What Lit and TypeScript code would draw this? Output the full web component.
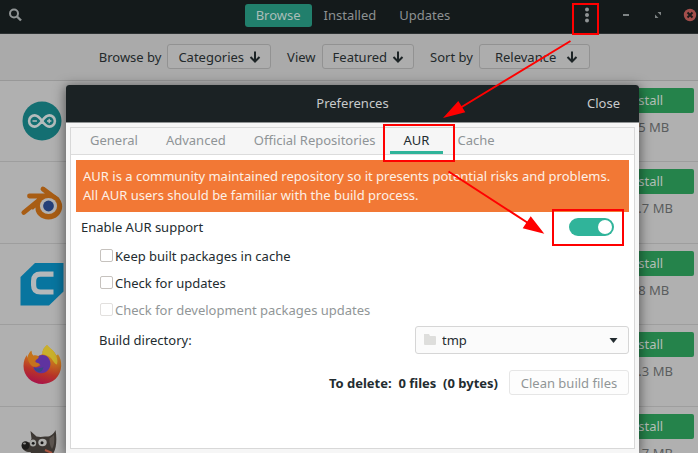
import { LitElement, html, css, svg } from "lit";
import { customElement, property, state } from "lit/decorators.js";
import { classMap } from "lit/directives/class-map.js";

const logos: Record<string, unknown> = {
  arduino: svg`
    <circle cx="22" cy="22" r="19.5" fill="#146f72"></circle>
    <g fill="none" stroke="#b4bcbc" stroke-width="2.6">
      <path d="M22 22c-2.500-3.600-4.600-5.600-7.300-5.600a5.600 5.600 0 0 0 0 11.200c2.700 0 4.800-2 7.300-5.600s4.600-5.600 7.300-5.600a5.600 5.600 0 0 1 0 11.200c-2.700 0-4.800-2-7.300-5.600z"></path>
      <path stroke-width="1.400" d="M12.500 22h4.400M27 22h4.400M29.200 19.800v4.400"></path>
    </g>`,
  blender: svg`
    <ellipse cx="28.500" cy="26.500" rx="13.700" ry="13" fill="#a85d14"></ellipse>
    <path fill="#a85d14" d="M11 29L27 13.500 36 16 20 32z"></path>
    <path fill="none" stroke="#a85d14" stroke-width="4.800" stroke-linecap="round" d="M23 9L37 19.500M9.500 16H30M3.800 32.500L24 16"></path>
    <path fill="#b0b0b0" d="M3 39L15.500 27.500 16 39z"></path>
    <ellipse cx="28.500" cy="26" rx="8.600" ry="8" fill="#b2b2b2"></ellipse>
    <circle cx="28.500" cy="26" r="5.400" fill="#243f78"></circle>`,
  cura: svg`
    <path fill="#08759f" d="M15 1h28.500v28.500L29 43.500H0.500V15z"></path>
    <path fill="#b4b8ba" d="M33.500 9.500v5.200H20.500q-4.300 0-4.300 4.300v4.200q0 4.300 4.300 4.300h13v5H20.500q-9.500 0-9.500-9.300v-4.200q0-9.500 9.500-9.500z"></path>`,
  firefox: svg`
    <defs>
      <linearGradient id="fx-body" x1="0.7" y1="0" x2="0.4" y2="1">
        <stop offset="0" stop-color="#c9a22a"></stop>
        <stop offset="0.4" stop-color="#c8701f"></stop>
        <stop offset="0.7" stop-color="#b93527"></stop>
        <stop offset="1" stop-color="#a8124a"></stop>
      </linearGradient>
    </defs>
    <path fill="url(#fx-body)" d="M27 2c2.500 3 5 4.200 7.500 7.500l2 3 1.500-1.200c2.500 3.700 3.500 7.700 3.200 12C40.500 33.500 33 41 22.500 41 11.500 41 3.500 33 3.500 23c0-5 1.500-8.500 3.500-11l.6 3c.4-2.700 1.800-5.500 3.700-7.300.2 2.300.8 3.800 2 5 1.700-.5 3.300-.4 5 .2L22.500 11c-.5-3.500 1.500-6.700 4.500-9z"></path>
    <path fill="#c9b02c" d="M27 2c2.500 3 5 4.200 7.500 7.500 2.500 4 3.700 8 2.500 12-3.500-1-5-7-9-8.500-1.500-.8-3.500-1.200-5.500-2-.5-3.500 1.500-6.700 4.500-9z"></path>
    <path fill="#5f33a0" d="M18.500 13c3.500-1.900 9-1 11 3.500 2.800 6.300-1 13.300-7.500 13.800-4.500.3-8.500-2.300-8.500-6.500 2 1.200 5 .5 7-1.500-2-.2-5-1.200-5-4.200 0-2.500 1.500-4.400 3-5.100z"></path>
    <path fill="#364a86" d="M14 24.500c2.500 1.500 6 1.200 9.500-.5-.8 3.500-2.500 5.300-4.500 5.200-2.200-.5-4.600-2.200-5-4.700z"></path>
    <path fill="#c5731c" d="M7.600 15c.4-2.700 1.800-5.500 3.700-7.300.2 2.300.8 3.800 2 5 2.500-.6 4.200-.2 5.700.8-.4 2.500-3.500 3-4.500 5.200 1.500.8 3.500 1 5.500 2.500-1.500 2-4 3-6.500 2.500-3-1-5-4.500-5.900-8.700z"></path>`,
  gimp: svg`
    <path fill="#3c3733" d="M35.500 5c1.500 8 1 17-1.500 22-2 4-7 6-13 6-5 0-8.500-2-10.500-6-4 .5-8-2-8.500-5.500l2-4.500 6 .5 1.500-4L10.500 6l6 5.500 4 .5 4.500-.5c5 .7 8.500-2 10.500-6.500z"></path>
    <path fill="#5c5550" d="M34 10c.8 6 0 11-2 14-2-3.500-3-7-2.500-10.500z"></path>
    <ellipse cx="5.500" cy="20.500" rx="4" ry="4.300" fill="#1c1b1a"></ellipse>
    <ellipse cx="4.500" cy="18.500" rx="1.500" ry="1" fill="#8d8d8b"></ellipse>
    <ellipse cx="13" cy="18" rx="3.200" ry="3.500" fill="#a9a9a6"></ellipse>
    <ellipse cx="22.500" cy="17.500" rx="4.200" ry="3.700" fill="#b0b0ae"></ellipse>
    <circle cx="13.200" cy="18.300" r="1.400" fill="#171717"></circle>
    <circle cx="22" cy="17.800" r="1.500" fill="#171717"></circle>
    <path stroke="#a85642" stroke-width="2" fill="none" d="M25 25l7 3"></path>`,
};

const packages = [
  { logo: "arduino", size: "38.5 MB" },
  { logo: "blender", size: "153.7 MB" },
  { logo: "cura", size: "30.8 MB" },
  { logo: "firefox", size: "216.3 MB" },
  { logo: "gimp", size: "109.7 MB" },
];

@customElement("package-row")
class PackageRow extends LitElement {
  @property() logo = "";
  @property() size = "";

  static styles = css`
    :host {
      display: flex;
      justify-content: space-between;
      align-items: flex-start;
      box-sizing: border-box;
      padding: 7px 4px 0 20px;
      border-bottom: 1px solid #9e9e9e;
      color: #5a5d5e;
    }
    .logo {
      width: 44px;
      height: 44px;
      margin-top: 11px;
    }
    .side {
      width: 99px;
      text-align: center;
      line-height: 18px;
    }
    .install {
      display: block;
      width: 100%;
      height: 25px;
      margin: 0 0 5px;
      padding: 0 0 2px;
      border: 0;
      border-radius: 2px;
      background: #25834b;
      color: #b4bfb8;
      font: inherit;
    }
  `;

  render() {
    return html`
      <svg class="logo" viewBox="0 0 44 44" aria-hidden="true">${logos[this.logo]}</svg>
      <div class="side">
        <button class="install">Install</button>
        <span>${this.size}</span>
      </div>
    `;
  }
}

@customElement("preferences-dialog")
class PreferencesDialog extends LitElement {
  @state() private tab = "AUR";

  static styles = css`
    :host {
      display: flex;
      flex-direction: column;
      box-sizing: border-box;
      background: #f6f6f6;
      color: #232c30;
      border-radius: 3px 3px 0 0;
      box-shadow: 0 2px 12px 1px rgba(0, 0, 0, 0.5);
    }
    button,
    select {
      font: inherit;
      color: inherit;
      margin: 0;
    }
    .title {
      display: grid;
      grid-template-columns: 1fr auto 1fr;
      align-items: center;
      box-sizing: border-box;
      height: 38px;
      padding: 0 19px 2px;
      background: #1b2224;
      color: #c8cacb;
      border-bottom: 1px solid #909394;
      border-radius: 3px 3px 0 0;
    }
    .heading {
      grid-column: 2;
      margin: 0;
      font: inherit;
    }
    .close {
      justify-self: end;
      padding: 0;
      border: 0;
      background: none;
    }
    .frame {
      flex: 1;
      margin: 4px;
      border: 1px solid #d8d8d8;
      background: #fff;
    }
    .tabs {
      display: flex;
      height: 26px;
      padding: 0 5px;
      background: #f6f6f6;
      border-bottom: 1px solid #dcdcdc;
    }
    .tab {
      padding: 0 14px;
      border: 0;
      border-bottom: 3px solid transparent;
      background: none;
      color: #8f9496;
    }
    .tab.on {
      color: #232c30;
      border-color: #30b49a;
    }
    .page {
      padding: 5px;
    }
    .warning {
      margin: 0;
      padding: 7px;
      background: #f27835;
      color: #fdf0e6;
      line-height: 19px;
    }
    .line {
      display: flex;
      align-items: center;
      justify-content: space-between;
      padding: 0 15px 0 5px;
      height: 30px;
    }
    .switch {
      appearance: none;
      display: flex;
      justify-content: flex-end;
      box-sizing: border-box;
      width: 45px;
      height: 18px;
      margin: 0;
      padding: 2px;
      border-radius: 9px;
      background: #30b49a;
    }
    .switch::before {
      content: "";
      width: 14px;
      height: 14px;
      border-radius: 50%;
      background: #fff;
    }
    .switch:not(:checked) {
      justify-content: flex-start;
      background: #c9cccd;
    }
    .checks {
      display: grid;
      grid-auto-rows: 27px;
      padding-left: 24px;
    }
    .check {
      display: flex;
      align-items: center;
      gap: 2px;
    }
    .check.off {
      color: #919697;
    }
    .box {
      appearance: none;
      box-sizing: border-box;
      width: 13px;
      height: 13px;
      margin: 0;
      border: 1px solid #c6c2be;
      border-radius: 2px;
      background: #fff;
    }
    .box:checked {
      background: #30b49a;
    }
    .off .box {
      border-color: #e2e0de;
    }
    .field {
      display: flex;
      align-items: center;
      justify-content: space-between;
      margin-top: 3px;
      padding-left: 23px;
    }
    .picker {
      position: relative;
      width: 214px;
    }
    .picker svg {
      position: absolute;
      pointer-events: none;
    }
    .folder {
      left: 8px;
      top: 7px;
    }
    .caret {
      right: 11px;
      top: 12px;
    }
    .select {
      appearance: none;
      display: block;
      box-sizing: border-box;
      width: 100%;
      height: 28px;
      padding: 0 26px;
      border: 1px solid #d6d6d6;
      border-radius: 3px;
      background: #fbfbfb;
    }
    .clean {
      display: flex;
      align-items: center;
      justify-content: flex-end;
      gap: 11px;
      margin-top: 16px;
      font-weight: 700;
      white-space: pre;
    }
    .clean-button {
      box-sizing: border-box;
      width: 120px;
      height: 25px;
      padding: 0;
      border: 1px solid #e6e6e6;
      border-radius: 3px;
      background: #fdfdfd;
      color: #919697;
      font-weight: 400;
    }
  `;

  private tabs = ["General", "Advanced", "Official Repositories", "AUR", "Cache"];

  render() {
    return html`
      <header class="title">
        <h2 class="heading">Preferences</h2>
        <button class="close">Close</button>
      </header>
      <div class="frame">
        <div class="tabs" role="tablist">
          ${this.tabs.map(
            (name) => html`<button
              role="tab"
              aria-selected=${this.tab === name}
              class=${classMap({ tab: true, on: this.tab === name })}
              @click=${() => (this.tab = name)}
            >${name}</button>`
          )}
        </div>
        <div class="page">
          <p class="warning">
            AUR is a community maintained repository so it presents potential risks and problems.<br />
            All AUR users should be familiar with the build process.
          </p>
          <div class="line">
            <label for="aur">Enable AUR support</label>
            <input class="switch" id="aur" type="checkbox" role="switch" checked />
          </div>
          <div class="checks">
            <label class="check"><input class="box" type="checkbox" />Keep built packages in cache</label>
            <label class="check"><input class="box" type="checkbox" />Check for updates</label>
            <label class="check off"><input class="box" type="checkbox" disabled />Check for development packages updates</label>
          </div>
          <div class="field">
            <label for="dir">Build directory:</label>
            <div class="picker">
              <select class="select" id="dir"><option>tmp</option></select>
              <svg class="folder" width="14" height="13" aria-hidden="true">
                <path fill="#dededc" d="M1 1h5l1 2h5q1 0 1 1v7q0 1-1 1H2q-1 0-1-1z"></path>
              </svg>
              <svg class="caret" width="9" height="5" aria-hidden="true">
                <path fill="#232c30" d="M0.500 0h8L4.500 5z"></path>
              </svg>
            </div>
          </div>
          <div class="clean">
            <span>To delete:  0 files  (0 bytes)</span>
            <button class="clean-button" disabled>Clean build files</button>
          </div>
        </div>
      </div>
    `;
  }
}

@customElement("app-root")
class AppRoot extends LitElement {
  static styles = css`
    :host {
      display: block;
      position: relative;
      height: 100vh;
      overflow: hidden;
      background: #b0b0b0;
      color: #23292b;
      font: 13px/18px "Noto Sans", sans-serif;
    }
    button {
      font: inherit;
      color: inherit;
      margin: 0;
      padding: 0;
      border: 0;
      background: none;
    }
    svg {
      display: block;
    }
    .bar {
      display: grid;
      grid-template-columns: 1fr auto 1fr;
      align-items: center;
      box-sizing: border-box;
      height: 34px;
      padding: 0 1px 3px 9px;
      background: #141a1b;
      border-bottom: 1px solid #2c3132;
      color: #8d9192;
    }
    .search {
      justify-self: start;
    }
    .views {
      display: flex;
      gap: 1px;
    }
    .view {
      height: 23px;
      padding: 0 11px;
      border-radius: 3px;
    }
    .view.on {
      background: #217f6c;
      color: #a9bdb8;
    }
    .controls {
      display: flex;
      justify-content: flex-end;
      align-items: center;
      gap: 18px;
    }
    .menu {
      margin-right: 7px;
    }
    .filters {
      display: flex;
      justify-content: center;
      align-items: center;
      gap: 16px;
      box-sizing: border-box;
      height: 47px;
      padding: 0 9px 1px 0;
      background: #aaaaaa;
      border-bottom: 1px solid #989898;
    }
    .filter {
      display: flex;
      align-items: center;
      gap: 6px;
    }
    .drop {
      display: flex;
      align-items: center;
      justify-content: center;
      gap: 5px;
      box-sizing: border-box;
      height: 25px;
      padding: 0 9px 0 10px;
      border: 1px solid #929292;
      border-radius: 3px;
      background: #adadad;
    }
    .drop.wide {
      gap: 10px;
      padding: 0 11px 0 15px;
    }
    .row {
      height: 81px;
    }
    .row:nth-child(even) {
      height: 82px;
    }
    .dialog {
      position: absolute;
      left: 66px;
      right: 59px;
      top: 85px;
      bottom: 0;
    }
    .marks {
      position: absolute;
      inset: 0;
      pointer-events: none;
    }
  `;

  private filter(label: string, value: string, wide = false) {
    return html`<div class="filter">
      <span id=${value}>${label}</span>
      <button class=${classMap({ drop: true, wide })} aria-describedby=${value}>
        ${value}
        <svg width="12" height="12" aria-hidden="true">
          <path fill="none" stroke="#1d2426" stroke-width="2" d="M6 0.500v10M1.500 6L6 10.500 10.500 6"></path>
        </svg>
      </button>
    </div>`;
  }

  render() {
    return html`
      <header class="bar">
        <button class="search" aria-label="Search">
          <svg width="14" height="14">
            <circle cx="5" cy="5.500" r="4" fill="none" stroke="#909495" stroke-width="2"></circle>
            <path stroke="#909495" stroke-width="2.400" d="M8 8.500l4 4"></path>
          </svg>
        </button>
        <nav class="views">
          <button class="view on">Browse</button>
          <button class="view">Installed</button>
          <button class="view">Updates</button>
        </nav>
        <div class="controls">
          <button class="menu" aria-label="Menu">
            <svg width="14" height="16" fill="#909495">
              <circle cx="7" cy="2.500" r="2"></circle>
              <circle cx="7" cy="8" r="2"></circle>
              <circle cx="7" cy="13.500" r="2"></circle>
            </svg>
          </button>
          <button aria-label="Minimize">
            <svg width="14" height="14"><path fill="#7f8485" d="M4 6h6v2H4z"></path></svg>
          </button>
          <button aria-label="Restore">
            <svg width="14" height="14">
              <path fill="#7f8485" d="M6.500 4H10v3.500zM4 6.500V10h3.500z"></path>
            </svg>
          </button>
          <button aria-label="Close window">
            <svg width="14" height="14">
              <circle cx="7" cy="7" r="6.200" fill="#a34e4b"></circle>
              <path stroke="#1a1a1a" stroke-width="2" d="M4.500 4.500l5 5M9.500 4.500l-5 5"></path>
            </svg>
          </button>
        </div>
      </header>
      <div class="filters">
        ${this.filter("Browse by", "Categories")} ${this.filter("View", "Featured")}
        ${this.filter("Sort by", "Relevance", true)}
      </div>
      <main>
        ${packages.map((p) => html`<package-row class="row" logo=${p.logo} size=${p.size}></package-row>`)}
      </main>
      <preferences-dialog class="dialog" role="dialog" aria-label="Preferences"></preferences-dialog>
      <svg class="marks" width="698" height="453" aria-hidden="true">
        <g fill="none" stroke="#f00" stroke-width="2">
          <rect x="573" y="4" width="25" height="30"></rect>
          <rect x="384" y="125" width="70" height="36"></rect>
          <rect x="553" y="210" width="70" height="35"></rect>
          <path d="M570.500 41L460 108M448.500 171.500L528 223"></path>
        </g>
        <path fill="#f00" d="M443 118L458.300 101 465.300 112.300zM544.300 233.700L530.700 216.300 522.700 228.300z"></path>
      </svg>
    `;
  }
}
